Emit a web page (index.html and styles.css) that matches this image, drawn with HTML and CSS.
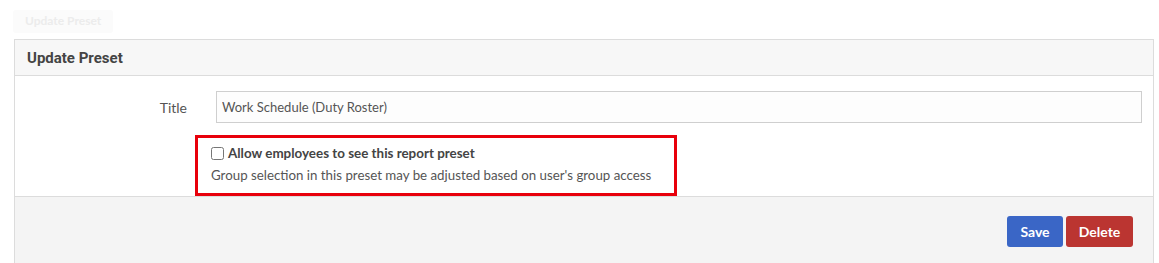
FILE: index.html
```html
<!DOCTYPE html>
<html lang="en">
<head>
    <meta charset="UTF-8">
    <title>Update Preset</title>
    <link rel="stylesheet" href="styles.css">
</head>
<body>
    <div class="page-title">Update Preset</div>

    <div class="panel">
        <div class="panel-heading">Update Preset</div>

        <div class="panel-body">
            <div class="form-row">
                <label class="form-label" for="title">Title</label>
                <input type="text" id="title" class="form-control" value="Work Schedule (Duty Roster)">
            </div>

            <div class="highlight">
                <label class="check">
                    <input type="checkbox">
                    <span>Allow employees to see this report preset</span>
                </label>
                <p class="help">Group selection in this preset may be adjusted based on user's group access</p>
            </div>
        </div>

        <div class="panel-footer">
            <button class="btn btn-save">Save</button>
            <button class="btn btn-delete">Delete</button>
        </div>
    </div>
</body>
</html>
```
FILE: styles.css
```css
:root {
    --text: #555;
    --text-dark: #444;
    --border: #dcdcdc;
    --heading-bg: #f7f7f7;
    --footer-bg: #f4f4f4;
    --blue: #3a66c6;
    --red: #bb3531;
    --mark: #e8000b;
}

* {
    margin: 0;
    padding: 0;
    box-sizing: border-box;
}

body {
    font-family: 'Lato', 'Liberation Sans', sans-serif;
    font-size: 14px;
    color: var(--text);
    background: #fff;
    padding: 10px 5px 0 14px;
    height: 263px;
    overflow: hidden;
}

.page-title {
    display: inline-block;
    width: 100px;
    height: 23px;
    margin-left: -1px;
    padding: 3px 0 0 12px;
    background: #fbfbfb;
    color: #ececec;
    font-weight: 700;
    font-size: 12px;
    border-radius: 3px;
}

.panel {
    margin-top: 6px;
    border: 1px solid var(--border);
    border-bottom: none;
}

.panel-heading {
    height: 36px;
    padding: 9px 12px 0;
    background: var(--heading-bg);
    border-bottom: 1px solid var(--border);
    font-family: 'Roboto', sans-serif;
    font-weight: 700;
    font-size: 15px;
    color: var(--text-dark);
}

.panel-body {
    padding: 15px 11px 0 0;
}

.form-row {
    display: grid;
    grid-template-columns: 187px 1fr;
    column-gap: 14px;
    align-items: center;
}

.form-label {
    text-align: right;
    padding-right: 15px;
    font-size: 14px;
    color: var(--text);
}

.form-control {
    height: 32px;
    padding: 0 5px;
    border: 1px solid #cfcfcf;
    background: #fdfdfd;
    font-family: inherit;
    font-size: 13px;
    color: var(--text);
}

.highlight {
    width: 482px;
    height: 61px;
    margin: 12px 0 0 180px;
    border: 3px solid var(--mark);
    padding: 7px 0 0 13px;
}

.check {
    display: flex;
    align-items: center;
    gap: 4px;
    font-weight: 700;
    font-size: 13.4px;
    color: var(--text-dark);
}

.check input {
    width: 13px;
    height: 13px;
    margin: 0;
}

.help {
    margin-top: 6px;
    font-size: 13.3px;
    white-space: nowrap;
    color: var(--text);
}

.panel-footer {
    display: flex;
    justify-content: flex-end;
    gap: 3px;
    height: 68px;
    padding: 19px 20px 0;
    background: var(--footer-bg);
    border-top: 1px solid var(--border);
}

.btn {
    height: 31px;
    padding: 0;
    border: none;
    border-radius: 3px;
    color: #fff;
    font-family: inherit;
    font-weight: 700;
    font-size: 14px;
}

.btn-save {
    width: 56px;
    background: var(--blue);
}

.btn-delete {
    width: 67px;
    background: var(--red);
}
```
